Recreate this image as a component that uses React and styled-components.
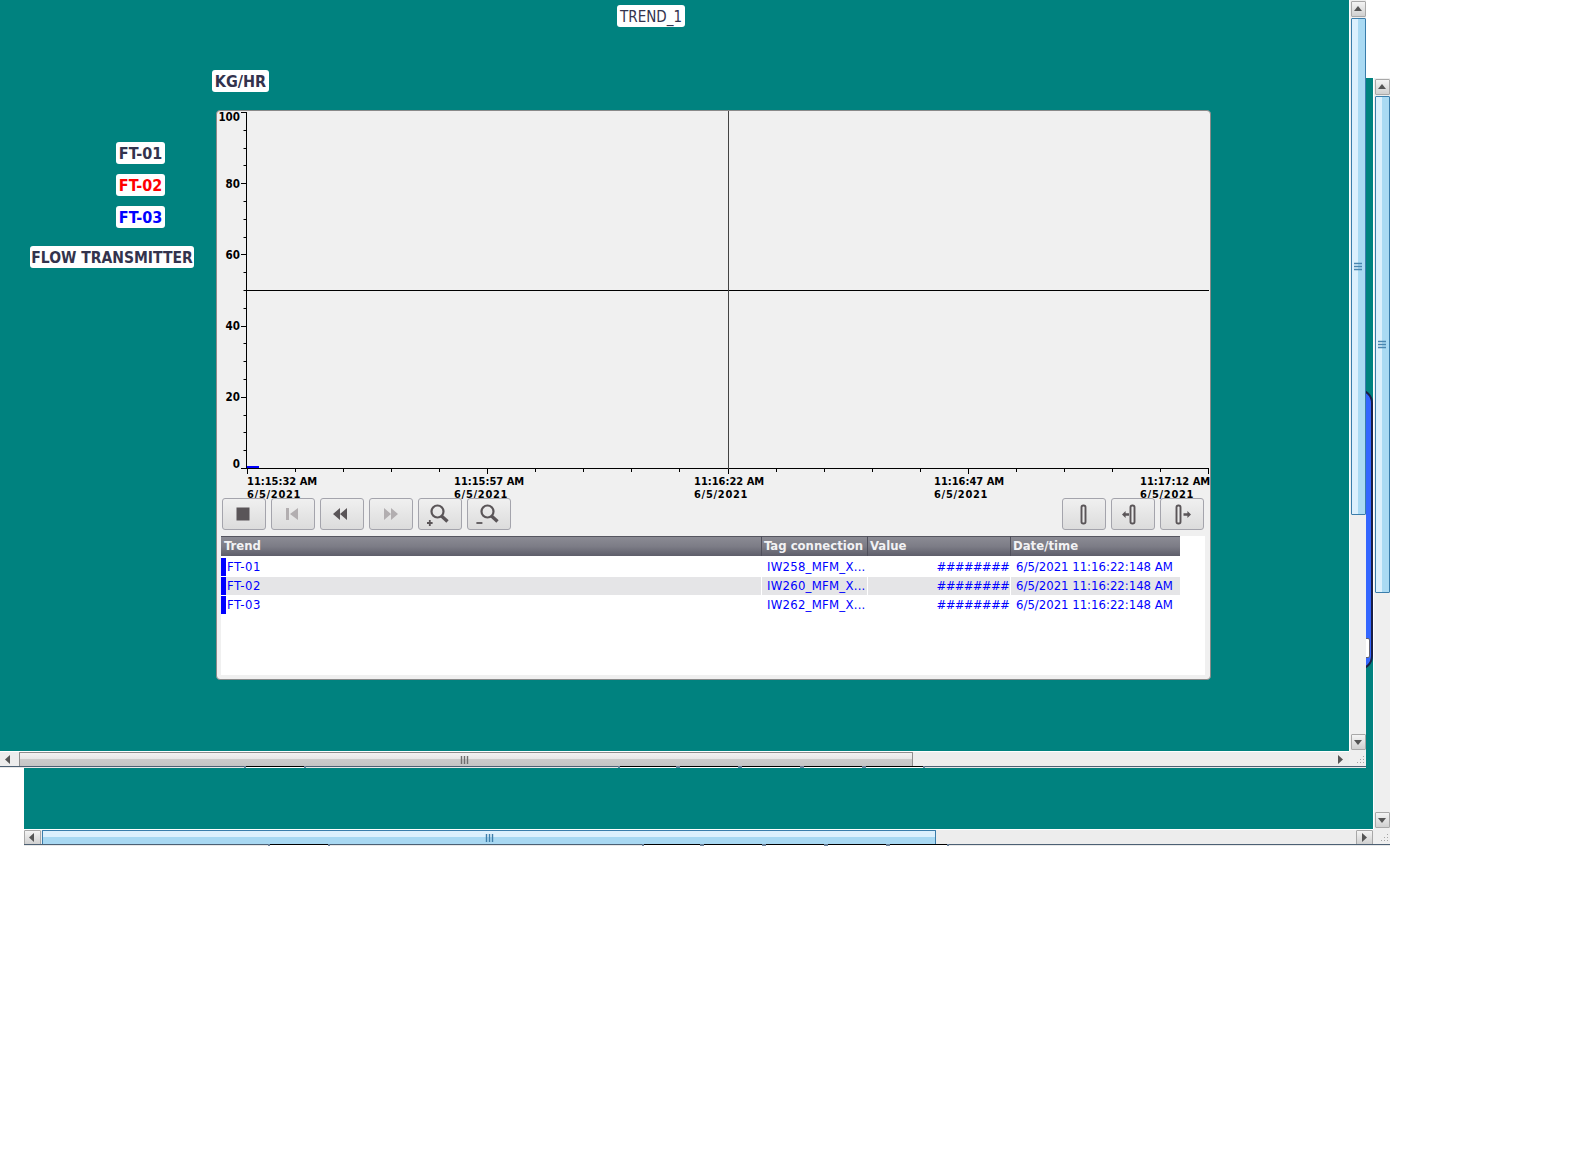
import React from "react";
import styled, { createGlobalStyle } from "styled-components";

const Global = createGlobalStyle`
  html, body { margin: 0; padding: 0; background: #fff; }
  #root { height: 1160px; overflow: hidden; }
`;

const FONT = `"DejaVu Sans Condensed", "DejaVu Sans", sans-serif`;

const Desktop = styled.div`
  position: relative;
  width: 1596px;
  height: 1160px;
  background: #fff;
  font-family: ${FONT};
  font-stretch: condensed;
`;

const Window = styled.div`
  position: absolute;
  left: ${(p) => p.$x}px;
  top: ${(p) => p.$y}px;
  width: 1366px;
  height: 768px;
  display: grid;
  grid-template-columns: 1349px 17px;
  grid-template-rows: 751px 15px 2px;
`;

const Canvas = styled.div`
  position: relative;
  background: #00827f;
  overflow: hidden;
`;

const VTrack = styled.div`
  display: flex;
  flex-direction: column;
  align-items: center;
  background: #efefef;
  border-left: 1px solid #fff;
  padding: 1px 0 1px;
  box-sizing: border-box;
`;

const ScrollBtn = styled.div`
  box-sizing: border-box;
  width: ${(p) => (p.$w ? p.$w : 15)}px;
  height: ${(p) => (p.$h ? p.$h : 16)}px;
  flex: none;
  display: flex;
  align-items: center;
  justify-content: center;
  border: 1px solid ${(p) => (p.$plain ? "transparent" : "#a8a8a8")};
  border-radius: 1px;
  background: ${(p) => (p.$plain ? "transparent" : "linear-gradient(#f4f4f4, #d0d0d0)")};
`;

const VThumb = styled.div`
  box-sizing: border-box;
  width: 15px;
  height: 497px;
  margin-top: 1px;
  flex: none;
  display: flex;
  align-items: center;
  justify-content: center;
  border: 1px solid #3a7dab;
  border-radius: 1px;
  background: linear-gradient(90deg, #dcf0fd 0 46%, #aadaf3 46% 100%);
`;

const VSpacer = styled.div`
  flex: 1;
`;

const HTrack = styled.div`
  display: flex;
  align-items: center;
  background: #ededed;
  border-top: 1px solid #fff;
  box-sizing: border-box;
`;

const HThumb = styled.div`
  box-sizing: border-box;
  width: 894px;
  height: 15px;
  margin-left: 1px;
  padding-right: ${(p) => (p.$blue ? 0 : 3)}px;
  flex: none;
  display: flex;
  align-items: center;
  justify-content: center;
  border: 1px solid ${(p) => (p.$blue ? "#3a7dab" : "#8e8e8e")};
  border-bottom: none;
  border-radius: 1px 1px 0 0;
  background: ${(p) =>
    p.$blue
      ? "linear-gradient(#dcf0fd 0 46%, #a8d8f2 46% 100%)"
      : "linear-gradient(#f2f2f2, #e6e6e6 46%, #cbcbcb 46%, #c4c4c4)"};
`;

const HSpacer = styled.div`
  flex: 1;
`;

const Corner = styled.div`
  background: #efefef;
  display: flex;
  align-items: flex-end;
  justify-content: flex-end;
`;

const Strip = styled.div`
  grid-column: 1 / 3;
  display: flex;
  height: 2px;
  background: linear-gradient(#4c6074 50%, #e8e8e8 50%);
  padding-left: 246px;
`;

const StripTab = styled.div`
  width: ${(p) => p.$w}px;
  margin-left: ${(p) => p.$gap}px;
  height: 2px;
  box-sizing: border-box;
  flex: none;
  border-top: 1px solid #000;
  background: #fff;
  box-shadow: 2px 0 0 #6a8098, -2px 0 0 #6a8098;
`;

const BlueShape = styled.div`
  position: absolute;
  left: 1240px;
  top: 311px;
  width: 109px;
  height: 281px;
  box-sizing: border-box;
  background: #3366ff;
  border: 2px solid #1a1f45;
  border-radius: 14px;
`;

const ShapeTag = styled.div`
  position: absolute;
  right: 1px;
  top: 247px;
  width: 30px;
  height: 20px;
  box-sizing: border-box;
  background: #fff;
  border: 1px solid #606070;
  border-radius: 2px;
`;

const Tag = styled.div`
  position: absolute;
  left: ${(p) => p.$x}px;
  top: ${(p) => p.$y}px;
  width: ${(p) => p.$w}px;
  height: 22px;
  box-sizing: border-box;
  padding-top: ${(p) => (p.$size ? 2 : 0)}px;
  display: flex;
  align-items: center;
  justify-content: center;
  white-space: nowrap;
  background: #fff;
  border-radius: 3px;
  color: ${(p) => p.$color || "#33334d"};
  font-size: ${(p) => p.$size || 16}px;
  font-weight: ${(p) => (p.$thin ? 400 : 700)};
`;

const Panel = styled.div`
  position: absolute;
  left: 216px;
  top: 110px;
  width: 995px;
  height: 570px;
  box-sizing: border-box;
  background: #f0f0f0;
  border: 1px solid #8a8a8a;
  border-radius: 4px;
  display: flex;
  flex-direction: column;
  overflow: hidden;
`;

const ChartSvg = styled.svg`
  display: block;
  width: 993px;
  height: 387px;
  flex: none;
  overflow: visible;
  font-family: ${FONT};
  font-stretch: condensed;
  font-size: 11px;
  font-weight: 700;
  fill: #000;
`;

const AxisValue = styled.text`
  font-size: 11.5px;
`;

const AxisDate = styled.tspan`
  letter-spacing: 0.7px;
`;

const Toolbar = styled.div`
  position: relative;
  display: flex;
  gap: 5px;
  padding: 0 6px 0 5px;
  height: 32px;
  flex: none;
`;

const ToolSpacer = styled.div`
  flex: 1;
`;

const ToolBtn = styled.div`
  box-sizing: border-box;
  width: 44px;
  height: 32px;
  padding-right: ${(p) => p.$nudge || 0}px;
  display: flex;
  align-items: center;
  justify-content: center;
  background: linear-gradient(#f0f0f0, #dcdcdc);
  border: 1px solid #a4a4ac;
  border-radius: 3px;
  color: ${(p) => (p.$off ? "#b2aeb0" : "#5a5558")};
`;

const TableWrap = styled.div`
  margin: 6px 5px 4px 4px;
  flex: 1;
  background: #fff;
  display: flex;
  flex-direction: column;
`;

const COLUMNS = "540px 105px 142px 169px";

const HeadRow = styled.div`
  display: grid;
  grid-template-columns: ${COLUMNS};
  column-gap: 1px;
  width: 959px;
  height: 20px;
  flex: none;
  background: #50505c;
  margin-bottom: 2px;
`;

const HeadCell = styled.div`
  box-sizing: border-box;
  padding-left: ${(p) => p.$pad || 2}px;
  line-height: 17px;
  font-size: 13px;
  font-weight: 700;
  color: #f2f2f4;
  white-space: nowrap;
  border-top: 1px solid #55555f;
  background: linear-gradient(#8b8b94, #7c7c86 50%, #5e5e6a);
`;

const Row = styled.div`
  display: grid;
  grid-template-columns: ${COLUMNS};
  column-gap: 1px;
  width: 959px;
  height: 18px;
  margin-bottom: 1px;
  flex: none;
`;

const Cell = styled.div`
  box-sizing: border-box;
  display: flex;
  align-items: center;
  height: 18px;
  padding-bottom: 2px;
  font-size: 13px;
  color: #0000ff;
  white-space: nowrap;
  overflow: hidden;
  background: ${(p) => (p.$alt ? "#e5e5e7" : "#fff")};
  padding-left: ${(p) => p.$pad || 0}px;
`;

const NameText = styled.span`
  letter-spacing: 0.45px;
`;

const TagText = styled.span`
  letter-spacing: 0.25px;
`;

const HashCell = styled(Cell)`
  justify-content: flex-end;
  padding-right: 1px;
  letter-spacing: -0.75px;
`;

const Swatch = styled.span`
  align-self: flex-start;
  width: 5px;
  height: 18px;
  margin-right: 1px;
  background: #0000ff;
  flex: none;
`;

const Tri = ({ dir, color = "#555" }) => {
  const pts = { up: "1,6 9,6 5,1", down: "1,2 9,2 5,7", left: "6,0 6,9 1,4.5", right: "2,0 2,9 7,4.5" }[dir];
  return (
    <svg width="10" height="9" viewBox="0 0 10 9" aria-hidden="true">
      <polygon points={pts} fill={color} />
    </svg>
  );
};

const Grip = ({ horizontal, color }) =>
  horizontal ? (
    <svg width="9" height="8" viewBox="0 0 9 8" aria-hidden="true">
      <path d="M1.5 0v8M4.5 0v8M7.5 0v8" stroke={color} strokeWidth="1.4" />
    </svg>
  ) : (
    <svg width="8" height="9" viewBox="0 0 8 9" aria-hidden="true">
      <path d="M0 1.5h8M0 4.5h8M0 7.5h8" stroke={color} strokeWidth="1.4" />
    </svg>
  );

const Dots = () => (
  <svg width="12" height="12" viewBox="0 0 12 12" aria-hidden="true">
    <g fill="#a4a4a4">
      <rect x="9" y="2" width="1" height="1" />
      <rect x="6" y="5" width="1" height="1" />
      <rect x="9" y="5" width="1" height="1" />
      <rect x="3" y="8" width="1" height="1" />
      <rect x="6" y="8" width="1" height="1" />
      <rect x="9" y="8" width="1" height="1" />
    </g>
  </svg>
);

const Glass = ({ sign }) => (
  <svg width="28" height="24" viewBox="0 0 28 24" aria-hidden="true">
    <circle cx="15.5" cy="9.5" r="6" fill="none" stroke="currentColor" strokeWidth="2.2" />
    <path d="M19.5 14l6 5.5" stroke="currentColor" strokeWidth="3.4" />
    {sign === "plus" ? (
      <path d="M5 21h5.6M7.8 18v6" stroke="currentColor" strokeWidth="1.8" />
    ) : (
      <path d="M4.4 21h6" stroke="currentColor" strokeWidth="1.8" />
    )}
  </svg>
);

const Capsule = ({ x }) => (
  <rect x={x} y="2.5" width="4" height="18" rx="1.8" fill="#eaeaea" stroke="currentColor" strokeWidth="1.9" />
);

const icons = {
  stop: (
    <svg width="14" height="14" viewBox="0 0 14 14" aria-hidden="true">
      <rect x="0.5" y="0.5" width="13" height="13" fill="currentColor" />
    </svg>
  ),
  first: (
    <svg width="14" height="14" viewBox="0 0 14 14" aria-hidden="true">
      <path d="M1 1h3v12H1zM13 1v12L5 7z" fill="currentColor" />
    </svg>
  ),
  rewind: (
    <svg width="16" height="14" viewBox="0 0 16 14" aria-hidden="true">
      <path d="M8 1v12L1 7zM15 1v12L8 7z" fill="currentColor" />
    </svg>
  ),
  forward: (
    <svg width="16" height="14" viewBox="0 0 16 14" aria-hidden="true">
      <path d="M1 1v12l7-6zM8 1v12l7-6z" fill="currentColor" />
    </svg>
  ),
  zoomIn: <Glass sign="plus" />,
  zoomOut: <Glass sign="minus" />,
  ruler: (
    <svg width="22" height="23" viewBox="0 0 22 23" aria-hidden="true">
      <Capsule x={8.5} />
    </svg>
  ),
  rulerLeft: (
    <svg width="22" height="23" viewBox="0 0 22 23" aria-hidden="true">
      <path d="M0 11.5l3.6-3.6v2.4H7v2.4H3.6v2.4z" fill="currentColor" />
      <Capsule x={8.5} />
    </svg>
  ),
  rulerRight: (
    <svg width="22" height="23" viewBox="0 0 22 23" aria-hidden="true">
      <Capsule x={5.5} />
      <path d="M20 11.5l-3.6-3.6v2.4H12.5v2.4h3.9v2.4z" fill="currentColor" />
    </svg>
  ),
};

const yLabels = [
  ["100", 121],
  ["80", 188],
  ["60", 259],
  ["40", 330],
  ["20", 401],
  ["0", 468],
];

const xLabels = [
  ["11:15:32 AM", 247],
  ["11:15:57 AM", 454],
  ["11:16:22 AM", 694],
  ["11:16:47 AM", 934],
  ["11:17:12 AM", 1140],
];

const yTicks = Array.from({ length: 21 }, (_, i) => 112 + i * 17.8);
const xTicks = Array.from({ length: 21 }, (_, i) => 247 + i * 48.05);

const Chart = () => (
  <ChartSvg viewBox="217 111 993 387" aria-label="trend chart">
    {yTicks.map((y, i) => (
      <line
        key={y}
        x1={i % 4 === 0 ? 241 : 243.5}
        x2="246.5"
        y1={Math.round(y) + 0.5}
        y2={Math.round(y) + 0.5}
        stroke="#000"
      />
    ))}
    {xTicks.map((x, i) => (
      <line
        key={x}
        x1={Math.round(x) + 0.5}
        x2={Math.round(x) + 0.5}
        y1="468.5"
        y2={i % 5 === 0 ? 474 : 472}
        stroke="#000"
      />
    ))}
    <line x1="246.5" x2="246.5" y1="112" y2="469" stroke="#000" />
    <line x1="246" x2="1209" y1="468.5" y2="468.5" stroke="#000" />
    <line x1="246" x2="1209" y1="290.5" y2="290.5" stroke="#000" />
    <line x1="728.5" x2="728.5" y1="111" y2="469" stroke="#444" />
    <rect x="247" y="466" width="12" height="2" fill="#0000ff" />
    {yLabels.map(([t, y]) => (
      <AxisValue key={t} x="240" y={y} textAnchor="end">
        {t}
      </AxisValue>
    ))}
    {xLabels.map(([t, x]) => (
      <text key={t} x={x}>
        <tspan x={x} y="485">
          {t}
        </tspan>
        <AxisDate x={x} y="497.5">
          6/5/2021
        </AxisDate>
      </text>
    ))}
  </ChartSvg>
);

const rows = [
  ["FT-01", "IW258_MFM_X..."],
  ["FT-02", "IW260_MFM_X..."],
  ["FT-03", "IW262_MFM_X..."],
];

const TrendPanel = () => (
  <Panel>
    <Chart />
    <Toolbar>
      <ToolBtn $nudge={2}>{icons.stop}</ToolBtn>
      <ToolBtn $off $nudge={3}>
        {icons.first}
      </ToolBtn>
      <ToolBtn $nudge={4}>{icons.rewind}</ToolBtn>
      <ToolBtn $off>{icons.forward}</ToolBtn>
      <ToolBtn $nudge={8}>{icons.zoomIn}</ToolBtn>
      <ToolBtn $nudge={6}>{icons.zoomOut}</ToolBtn>
      <ToolSpacer />
      <ToolBtn>{icons.ruler}</ToolBtn>
      <ToolBtn>{icons.rulerLeft}</ToolBtn>
      <ToolBtn>{icons.rulerRight}</ToolBtn>
    </Toolbar>
    <TableWrap>
      <HeadRow>
        <HeadCell $pad={3}>Trend</HeadCell>
        <HeadCell>Tag connection</HeadCell>
        <HeadCell>Value</HeadCell>
        <HeadCell>Date/time</HeadCell>
      </HeadRow>
      {rows.map(([name, tag], i) => (
        <Row key={name}>
          <Cell $alt={i === 1}>
            <Swatch />
            <NameText>{name}</NameText>
          </Cell>
          <Cell $alt={i === 1} $pad={5}>
            <TagText>{tag}</TagText>
          </Cell>
          <HashCell $alt={i === 1}>########</HashCell>
          <Cell $alt={i === 1} $pad={5}>
            6/5/2021 11:16:22:148 AM
          </Cell>
        </Row>
      ))}
    </TableWrap>
  </Panel>
);

const stripTabs = [
  { w: 58, gap: 0 },
  { w: 56, gap: 316 },
  { w: 58, gap: 4 },
  { w: 58, gap: 4 },
  { w: 58, gap: 4 },
  { w: 57, gap: 4 },
];

const ScreenWindow = ({ x, y, blue, children }) => (
  <Window $x={x} $y={y}>
    <Canvas>{children}</Canvas>
    <VTrack>
      <ScrollBtn>
        <Tri dir="up" />
      </ScrollBtn>
      <VThumb>
        <Grip color="#4a86b0" />
      </VThumb>
      <VSpacer />
      <ScrollBtn>
        <Tri dir="down" />
      </ScrollBtn>
    </VTrack>
    <HTrack>
      <ScrollBtn $plain={!blue} $w={blue ? 17 : 18} $h={15}>
        <Tri dir="left" />
      </ScrollBtn>
      <HThumb $blue={blue}>
        <Grip horizontal color={blue ? "#3f7fab" : "#6e6e6e"} />
      </HThumb>
      <HSpacer />
      <ScrollBtn $plain={!blue} $w={17} $h={15}>
        <Tri dir="right" />
      </ScrollBtn>
    </HTrack>
    <Corner>
      <Dots />
    </Corner>
    <Strip>
      {stripTabs.map((t, i) => (
        <StripTab key={i} $w={t.w} $gap={t.gap} />
      ))}
    </Strip>
  </Window>
);

export default function App() {
  return (
    <Desktop>
      <Global />
      <ScreenWindow x={24} y={78} blue>
        <BlueShape>
          <ShapeTag />
        </BlueShape>
      </ScreenWindow>
      <ScreenWindow x={0} y={0}>
        <Tag $x={617} $y={5} $w={68} $size={15} $thin>
          TREND_1
        </Tag>
        <Tag $x={212} $y={70} $w={57}>
          KG/HR
        </Tag>
        <Tag $x={116} $y={142} $w={49}>
          FT-01
        </Tag>
        <Tag $x={116} $y={174} $w={49} $color="#ff0000">
          FT-02
        </Tag>
        <Tag $x={116} $y={206} $w={49} $color="#0000ff">
          FT-03
        </Tag>
        <Tag $x={30} $y={246} $w={164} $size={15.5}>
          FLOW TRANSMITTER
        </Tag>
        <TrendPanel />
      </ScreenWindow>
    </Desktop>
  );
}
